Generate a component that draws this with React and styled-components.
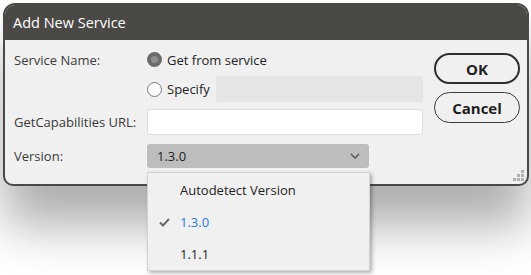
import React from 'react';
import styled, { createGlobalStyle } from 'styled-components';

const GlobalStyle = createGlobalStyle`
  html, body {
    margin: 0;
    padding: 0;
    background: #ffffff;
    font-family: "Open Sans", "Liberation Sans", sans-serif;
    overflow: hidden;
  }
`;

const Page = styled.div`
  width: 531px;
  height: 275px;
  padding: 3px 0 0 3px;
  box-sizing: border-box;
  position: relative;
`;

const Dialog = styled.div`
  width: 526px;
  box-sizing: border-box;
  border: 2px solid #4a4946;
  border-radius: 12px 12px 10px 10px;
  background: #f0f0f0;
  box-shadow: 0 40px 50px rgba(0, 0, 0, 0.32);
  overflow: hidden;
  position: relative;
`;

const TitleBar = styled.div`
  height: 35px;
  background: #4a4946;
  color: #ffffff;
  font-size: 14.5px;
  display: flex;
  align-items: center;
  padding-left: 8px;
`;

const Body = styled.div`
  display: flex;
  height: 144px;
  padding: 5px 0 0 9px;
  box-sizing: border-box;
`;

const Form = styled.div`
  display: flex;
  flex-direction: column;
  width: 409px;
`;

const Row = styled.div`
  display: flex;
  align-items: center;
  height: ${(p) => p.h}px;
  margin-top: ${(p) => p.gap || 0}px;
`;

const Label = styled.div`
  width: 133px;
  flex-shrink: 0;
  font-size: 13px;
  color: #3a3a3a;
`;

const RadioWrap = styled.label`
  display: flex;
  align-items: center;
  gap: 5px;
  font-size: 13px;
  color: #222;
`;

const RadioDot = styled.span`
  width: 15px;
  height: 15px;
  border-radius: 50%;
  box-sizing: border-box;
  flex-shrink: 0;
  border: ${(p) => (p.checked ? '4px solid #6c6c6c' : '1px solid #7a7a7a')};
  background: ${(p) => (p.checked ? '#8e8e8e' : '#fbfbfb')};
`;

const TextBox = styled.div`
  height: ${(p) => p.h}px;
  flex: 1;
  margin-left: ${(p) => p.ml || 0}px;
  box-sizing: border-box;
  border-radius: 3px;
  background: ${(p) => (p.disabled ? '#e5e5e5' : '#ffffff')};
  border: 1px solid ${(p) => (p.disabled ? '#e5e5e5' : '#dcdcdc')};
`;

const Select = styled.div`
  width: 222px;
  height: 24px;
  box-sizing: border-box;
  border-radius: 3px;
  background: #bdbdbd;
  display: flex;
  align-items: center;
  justify-content: space-between;
  padding: 0 9px 0 10px;
  font-size: 13px;
  color: #222;
`;

const Buttons = styled.div`
  display: flex;
  flex-direction: column;
  gap: 8px;
  padding-top: 8px;
  margin-left: 11px;
`;

const Button = styled.button`
  width: 86px;
  height: 31px;
  box-sizing: border-box;
  border-radius: 16px;
  background: #f0f0f0;
  border: ${(p) => (p.primary ? '2px solid #2e2e2e' : '1px solid #3a3a3a')};
  font-family: "Open Sans", "Liberation Sans", sans-serif;
  font-weight: 700;
  font-size: 15px;
  color: #1e1e1e;
  padding: 0;
`;

const Grip = styled.svg`
  position: absolute;
  right: 3px;
  bottom: 3px;
`;

const Menu = styled.div`
  position: absolute;
  left: 147px;
  top: 172px;
  width: 223px;
  height: 99px;
  box-sizing: border-box;
  background: #f0f0f0;
  border: 1px solid #d2d2d2;
  box-shadow: 2px 2px 4px rgba(0, 0, 0, 0.3);
  display: flex;
  flex-direction: column;
  padding-top: 1px;
`;

const MenuItem = styled.div`
  height: 33px;
  display: flex;
  align-items: center;
  font-size: 13px;
  color: ${(p) => (p.selected ? '#2b7de1' : '#222')};
`;

const CheckSlot = styled.span`
  width: 32px;
  display: flex;
  justify-content: center;
`;

const Chevron = () => (
  <svg width="10" height="6" viewBox="0 0 10 6">
    <path d="M1 1 L5 5 L9 1" fill="none" stroke="#555" strokeWidth="1.5" />
  </svg>
);

const Check = () => (
  <svg width="11" height="9" viewBox="0 0 11 9">
    <path d="M1 4.5 L4 7.5 L10 1" fill="none" stroke="#6a6a6a" strokeWidth="2" />
  </svg>
);

export default function App() {
  return (
    <Page>
      <GlobalStyle />
      <Dialog>
        <TitleBar>Add New Service</TitleBar>
        <Body>
          <Form>
            <Row h={29}>
              <Label>Service Name:</Label>
              <RadioWrap>
                <RadioDot checked />
                Get from service
              </RadioWrap>
            </Row>
            <Row h={26} gap={2}>
              <Label />
              <RadioWrap>
                <RadioDot />
                Specify
              </RadioWrap>
              <TextBox h={26} ml={6} disabled />
            </Row>
            <Row h={26} gap={7}>
              <Label>GetCapabilities URL:</Label>
              <TextBox h={26} />
            </Row>
            <Row h={24} gap={9}>
              <Label>Version:</Label>
              <Select>
                1.3.0
                <Chevron />
              </Select>
            </Row>
          </Form>
          <Buttons>
            <Button primary>OK</Button>
            <Button>Cancel</Button>
          </Buttons>
        </Body>
        <Grip width="11" height="11" viewBox="0 0 11 11">
          <g fill="#b0b0b0">
            <rect x="8" y="0" width="3" height="3" />
            <rect x="4" y="4" width="3" height="3" />
            <rect x="8" y="4" width="3" height="3" />
            <rect x="0" y="8" width="3" height="3" />
            <rect x="4" y="8" width="3" height="3" />
            <rect x="8" y="8" width="3" height="3" />
          </g>
        </Grip>
      </Dialog>
      <Menu>
        <MenuItem>
          <CheckSlot />
          Autodetect Version
        </MenuItem>
        <MenuItem selected>
          <CheckSlot>
            <Check />
          </CheckSlot>
          1.3.0
        </MenuItem>
        <MenuItem>
          <CheckSlot />
          1.1.1
        </MenuItem>
      </Menu>
    </Page>
  );
}
